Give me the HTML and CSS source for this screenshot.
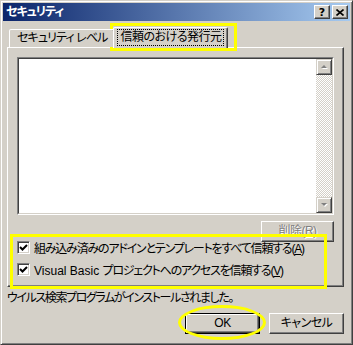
FILE: index.html
```html
<!DOCTYPE html>
<html lang="ja">
<head>
    <meta charset="UTF-8">
    <title>セキュリティ</title>
    <link rel="stylesheet" href="styles.css">
</head>
<body>
    <div class="window">
        <div class="titlebar">
            <span class="title">セキュリティ</span>
            <div class="caption-btns">
                <span class="cap-btn">?</span>
                <span class="cap-btn">
                    <svg width="8" height="7" viewBox="0 0 8 7"><path d="M0.5 0.5 L7.5 6.5 M7.5 0.5 L0.5 6.5" stroke="#000" stroke-width="1.6"/></svg>
                </span>
            </div>
        </div>

        <div class="content">
            <div class="tabs">
                <div class="tab">セキュリティ レベル</div>
                <div class="tab active"><span class="focus">信頼のおける発行元</span></div>
            </div>

            <div class="panel">
                <!-- 発行元リスト -->
                <div class="listbox">
                    <div class="listbox-inner">
                        <div class="list-area"></div>
                        <div class="scrollbar">
                            <div class="sb-btn">
                                <svg width="7" height="5" viewBox="0 0 7 5"><path d="M4 1 L7 4 L1 4 Z" fill="#fff"/><path d="M3 0 L6 3 L0 3 Z" fill="#808080"/></svg>
                            </div>
                            <div class="sb-track"></div>
                            <div class="sb-btn">
                                <svg width="7" height="5" viewBox="0 0 7 5"><path d="M1 1 L7 1 L4 4 Z" fill="#fff"/><path d="M0 0 L6 0 L3 3 Z" fill="#808080"/></svg>
                            </div>
                        </div>
                    </div>
                </div>

                <div class="row-right">
                    <button class="btn btn-remove" disabled>削除(<u>R</u>)</button>
                </div>

                <div class="checks">
                    <label class="check">
                        <span class="box"><svg width="9" height="9" viewBox="0 0 9 9"><path d="M1 4 L3.5 6.5 L8 2" stroke="#000" stroke-width="2" fill="none"/></svg></span>
                        <span>組み込み済みのアドインとテンプレートをすべて信頼する(<u>A</u>)</span>
                    </label>
                    <label class="check">
                        <span class="box"><svg width="9" height="9" viewBox="0 0 9 9"><path d="M1 4 L3.5 6.5 L8 2" stroke="#000" stroke-width="2" fill="none"/></svg></span>
                        <span><span class="latin">Visual Basic </span>プロジェクトへのアクセスを信頼する(<u>V</u>)</span>
                    </label>
                </div>
            </div>

            <p class="status">ウイルス検索プログラムがインストールされました。</p>

            <div class="actions">
                <button class="btn btn-default">OK</button>
                <button class="btn">キャンセル</button>
            </div>
        </div>

        <!-- 黄色の注釈 -->
        <div class="mark mark-tab"></div>
        <div class="mark mark-checks"></div>
        <div class="mark mark-ok"></div>
    </div>
</body>
</html>
```

FILE: styles.css
```css
body {
    margin: 0;
    font-family: "Liberation Sans", "Noto Sans CJK JP", sans-serif;
    font-size: 12px;
    font-feature-settings: "palt";
    letter-spacing: -0.5px;
    color: #000;
    background-color: #d4d0c8;
}
.window {
    position: relative;
    width: 353px;
    height: 345px;
    box-sizing: border-box;
    background-color: #d4d0c8;
    border: 1px solid;
    border-color: #d4d0c8 #404040 #404040 #d4d0c8;
    box-shadow: inset 1px 1px #fff, inset -1px -1px #808080;
    padding: 2px;
    display: flex;
    flex-direction: column;
}
.titlebar {
    height: 18px;
    background: linear-gradient(to right, #0a246a, #a6caf0);
    display: flex;
    align-items: center;
    justify-content: space-between;
    padding: 0 2px 0 3px;
}
.title {
    color: white;
    font-weight: bold;
    line-height: 18px;
    letter-spacing: -1px;
}
.caption-btns {
    display: flex;
    gap: 2px;
}
.cap-btn {
    width: 16px;
    height: 14px;
    box-sizing: border-box;
    background-color: #d4d0c8;
    border: 1px solid;
    border-color: #fff #404040 #404040 #fff;
    box-shadow: inset -1px -1px #808080;
    display: flex;
    align-items: center;
    justify-content: center;
    font-family: "DejaVu Sans", sans-serif;
    font-weight: bold;
    font-size: 11px;
    line-height: 1;
    letter-spacing: 0;
}
.content {
    flex: 1;
    padding: 6px 6px 0 4px;
    display: flex;
    flex-direction: column;
}
.tabs {
    display: flex;
    align-items: flex-end;
    height: 20px;
    padding-left: 2px;
    position: relative;
    z-index: 1;
}
.tab {
    height: 18px;
    box-sizing: border-box;
    padding: 0 7px;
    line-height: 17px;
    letter-spacing: -0.9px;
    border: 1px solid;
    border-bottom: none;
    border-color: #fff #404040 transparent #fff;
    border-radius: 2px 2px 0 0;
    box-shadow: inset -1px 0 #808080;
    background-color: #d4d0c8;
    white-space: nowrap;
}
.tab.active {
    height: 21px;
    margin: 0 -2px -1px -2px;
    padding: 2px 4px 0 4px;
    line-height: 15px;
    letter-spacing: -0.5px;
}
.focus {
    display: inline-block;
    outline: 1px dotted #000;
    padding: 0 2px;
}
.panel {
    height: 240px;
    box-sizing: border-box;
    border: 1px solid;
    border-color: #fff #404040 #404040 #fff;
    box-shadow: inset -1px -1px #808080;
    padding: 9px 9px 0 9px;
}
.listbox {
    height: 158px;
    box-sizing: border-box;
    border: 1px solid;
    border-color: #808080 #fff #fff #808080;
}
.listbox-inner {
    height: 100%;
    box-sizing: border-box;
    border: 1px solid;
    border-color: #404040 #d4d0c8 #d4d0c8 #404040;
    display: flex;
}
.list-area {
    flex: 1;
    background: white;
}
.scrollbar {
    width: 16px;
    display: flex;
    flex-direction: column;
}
.sb-btn {
    height: 16px;
    box-sizing: border-box;
    background-color: #d4d0c8;
    border: 1px solid;
    border-color: #d4d0c8 #404040 #404040 #d4d0c8;
    box-shadow: inset 1px 1px #fff, inset -1px -1px #808080;
    display: flex;
    align-items: center;
    justify-content: center;
}
.sb-track {
    flex: 1;
    background: repeating-conic-gradient(#fff 0 25%, #d4d0c8 0 50%) 0 0 / 2px 2px;
}
.row-right {
    display: flex;
    justify-content: flex-end;
    margin-top: 6px;
}
.btn {
    height: 21px;
    box-sizing: border-box;
    padding: 0;
    font-family: inherit;
    font-size: 12px;
    font-feature-settings: "palt";
    letter-spacing: -0.5px;
    line-height: 17px;
    color: #000;
    background-color: #d4d0c8;
    border: 1px solid;
    border-color: #fff #404040 #404040 #fff;
    box-shadow: inset -1px -1px #808080;
}
.btn u, .check u {
    text-underline-offset: 1px;
}
.btn-remove {
    width: 73px;
    color: #808080;
    text-shadow: 1px 1px #fff;
}
.checks {
    display: flex;
    flex-direction: column;
    margin-top: -6px;
}
.check {
    height: 22px;
    display: flex;
    align-items: center;
    gap: 4px;
    letter-spacing: -1.2px;
    white-space: nowrap;
}
.check .latin {
    letter-spacing: 0;
}
.box {
    width: 13px;
    height: 13px;
    box-sizing: border-box;
    background: white;
    border: 1px solid;
    border-color: #808080 #fff #fff #808080;
    box-shadow: inset 1px 1px #404040, inset -1px -1px #d4d0c8;
    display: flex;
    align-items: center;
    justify-content: center;
}
.status {
    margin: 4px 0 0 0;
    line-height: 14px;
    letter-spacing: -1.4px;
    white-space: nowrap;
}
.actions {
    display: flex;
    justify-content: flex-end;
    gap: 9px;
    margin-top: 8px;
}
.actions .btn {
    width: 75px;
}
.btn-default {
    border-color: #000;
    box-shadow: inset 1px 1px #fff, inset -1px -1px #404040, inset -2px -2px #808080;
}
.mark {
    position: absolute;
    border: 3px solid #ffff00;
    box-sizing: border-box;
    pointer-events: none;
}
.mark-tab {
    left: 109px;
    top: 22px;
    width: 127px;
    height: 28px;
}
.mark-checks {
    left: 9px;
    top: 233px;
    width: 317px;
    height: 55px;
}
.mark-ok {
    left: 177px;
    top: 304px;
    width: 88px;
    height: 35px;
    border-radius: 50%;
}
```
